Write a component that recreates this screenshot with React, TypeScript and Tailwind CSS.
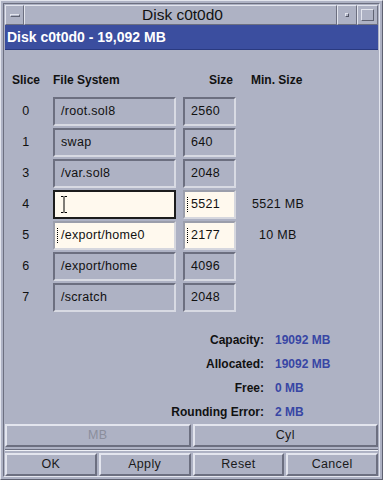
import React from "react";

type Row = {
  slice: string;
  fs: string;
  size: string;
  min?: string;
  minPad?: string;
  editing?: boolean;
  focused?: boolean;
};

const rows: Row[] = [
  { slice: "0", fs: "/root.sol8", size: "2560" },
  { slice: "1", fs: "swap", size: "640" },
  { slice: "3", fs: "/var.sol8", size: "2048" },
  { slice: "4", fs: "", size: "5521", min: "5521 MB", minPad: "ml-[16px]", editing: true, focused: true },
  { slice: "5", fs: "/export/home0", size: "2177", min: "10 MB", minPad: "ml-[23px]", editing: true },
  { slice: "6", fs: "/export/home", size: "4096" },
  { slice: "7", fs: "/scratch", size: "2048" },
];

const summary = [
  { label: "Capacity:", value: "19092 MB" },
  { label: "Allocated:", value: "19092 MB" },
  { label: "Free:", value: "0 MB" },
  { label: "Rounding Error:", value: "2 MB" },
];

const IBeam = () => (
  <svg width="6" height="17" viewBox="0 0 6 17" className="shrink-0">
    <path d="M0 0.5h2.5M3.5 0.5h2.5M3 1v15M0 16.5h2.5M3.5 16.5h2.5" stroke="#000" strokeWidth="1" fill="none" />
  </svg>
);

const DotCursor = () => (
  <span className="inline-block w-[3px] h-[15px] border-l border-dotted border-black mr-[1px] shrink-0" />
);

function Field({ value, width, editing, focused }: { value: string; width: string; editing?: boolean; focused?: boolean }) {
  if (focused) {
    return (
      <div className={`${width} h-full border-2 border-[#1c1c1c] bg-[#fff9ee] flex items-center pl-[6px]`}>
        <IBeam />
        {value}
      </div>
    );
  }
  if (editing) {
    return (
      <div className={`${width} h-full border-2 border-t-[#9b9eab] border-l-[#9b9eab] border-b-[#d6d7de] border-r-[#d6d7de] bg-[#fff9ee] flex items-center pl-[2px]`}>
        <DotCursor />
        {value}
      </div>
    );
  }
  return (
    <div className={`${width} h-full border-2 border-t-[#6c6f80] border-l-[#6c6f80] border-b-[#d8dae3] border-r-[#d8dae3] flex items-center pl-[6px]`}>
      {value}
    </div>
  );
}

function Button({ label, disabled, className }: { label: string; disabled?: boolean; className?: string }) {
  return (
    <div
      className={`h-full flex items-center justify-center border-2 border-t-[#e3e5ee] border-l-[#e3e5ee] border-b-[#6c6f80] border-r-[#6c6f80] text-[12.5px] tracking-[0.3px] ${
        disabled ? "text-[#8b8e9c]" : "text-[#1a1a1a]"
      } ${className ?? ""}`}
    >
      {label}
    </div>
  );
}

export default function App() {
  return (
    <div className="w-[383px] h-[480px] bg-[#aeb2c4] font-['Liberation_Sans',Arial,sans-serif] text-[#111] border border-t-[#e3e5ee] border-l-[#e3e5ee] border-b-[#5f6272] border-r-[#5f6272] p-[2px] flex flex-col">
      <div className="flex-1 flex flex-col border border-t-[#6c6f80] border-l-[#6c6f80] border-b-[#e3e5ee] border-r-[#e3e5ee] px-[1px] pt-[1px]">
        {/* title bar */}
        <div className="h-[20px] flex shrink-0">
          <div className="w-[19px] flex items-center justify-center border border-t-[#e3e5ee] border-l-[#e3e5ee] border-b-[#6c6f80] border-r-[#6c6f80]">
            <div className="w-[10px] h-[3px] border border-t-[#e3e5ee] border-l-[#e3e5ee] border-b-[#5f6272] border-r-[#5f6272]" />
          </div>
          <div className="flex-1 flex items-center justify-center border border-t-[#e3e5ee] border-l-[#e3e5ee] border-b-[#6c6f80] border-r-[#6c6f80] text-[15.5px] leading-none pl-[4px]">
            Disk c0t0d0
          </div>
          <div className="w-[20px] flex items-center justify-center border border-t-[#e3e5ee] border-l-[#e3e5ee] border-b-[#6c6f80] border-r-[#6c6f80]">
            <div className="w-[4px] h-[4px] border border-t-[#e3e5ee] border-l-[#e3e5ee] border-b-[#4f5262] border-r-[#4f5262]" />
          </div>
          <div className="w-[21px] flex items-center justify-center border border-t-[#e3e5ee] border-l-[#e3e5ee] border-b-[#6c6f80] border-r-[#6c6f80]">
            <div className="w-[13px] h-[12px] border border-t-[#e3e5ee] border-l-[#e3e5ee] border-b-[#5f6272] border-r-[#5f6272]" />
          </div>
        </div>

        {/* blue header */}
        <div className="h-[25px] shrink-0 bg-[#3b4e9f] border-b border-[#2a3a80] flex items-center pl-[2px] text-white font-bold text-[14px]">
          Disk c0t0d0 - 19,092 MB
        </div>

        {/* column headers */}
        <div className="mt-[21px] h-[18px] flex items-center font-bold text-[12px] shrink-0">
          <div className="w-[42px] text-center">Slice</div>
          <div className="ml-[6px] w-[123px]">File System</div>
          <div className="ml-[7px] w-[50px] text-right">Size</div>
          <div className="ml-[18px]">Min. Size</div>
        </div>

        {/* slices */}
        <div className="mt-[8px] flex flex-col gap-[2px] text-[12.5px] tracking-[0.3px] shrink-0">
          {rows.map((r) => (
            <div key={r.slice} className="h-[29px] flex items-center">
              <div className="w-[42px] text-center">{r.slice}</div>
              <div className="ml-[6px] h-full">
                <Field value={r.fs} width="w-[123px]" editing={r.editing} focused={r.focused} />
              </div>
              <div className="ml-[7px] h-full">
                <Field value={r.size} width="w-[53px]" editing={r.editing} />
              </div>
              {r.min && <div className={`${r.minPad} text-[12.5px]`}>{r.min}</div>}
            </div>
          ))}
        </div>

        {/* summary */}
        <div className="mt-[16px] flex flex-col text-[12px] font-bold shrink-0">
          {summary.map((s) => (
            <div key={s.label} className="h-[24px] flex items-center">
              <div className="w-[259px] text-right">{s.label}</div>
              <div className="ml-[11px] text-[#3846a4]">{s.value}</div>
            </div>
          ))}
        </div>

        {/* units */}
        <div className="h-[23px] flex gap-[2px] shrink-0">
          <Button label="MB" disabled className="flex-1" />
          <Button label="Cyl" className="flex-1" />
        </div>

        <div className="h-[6px] flex flex-col justify-center shrink-0">
          <div className="h-[2px] border-t border-t-[#6c6f80] border-b border-b-[#eef0f6]" />
        </div>

        {/* actions */}
        <div className="h-[23px] flex gap-[2px] shrink-0">
          <Button label="OK" className="flex-1" />
          <Button label="Apply" className="flex-1" />
          <Button label="Reset" className="flex-1" />
          <Button label="Cancel" className="flex-1" />
        </div>
        <div className="flex-1" />
      </div>
    </div>
  );
}
